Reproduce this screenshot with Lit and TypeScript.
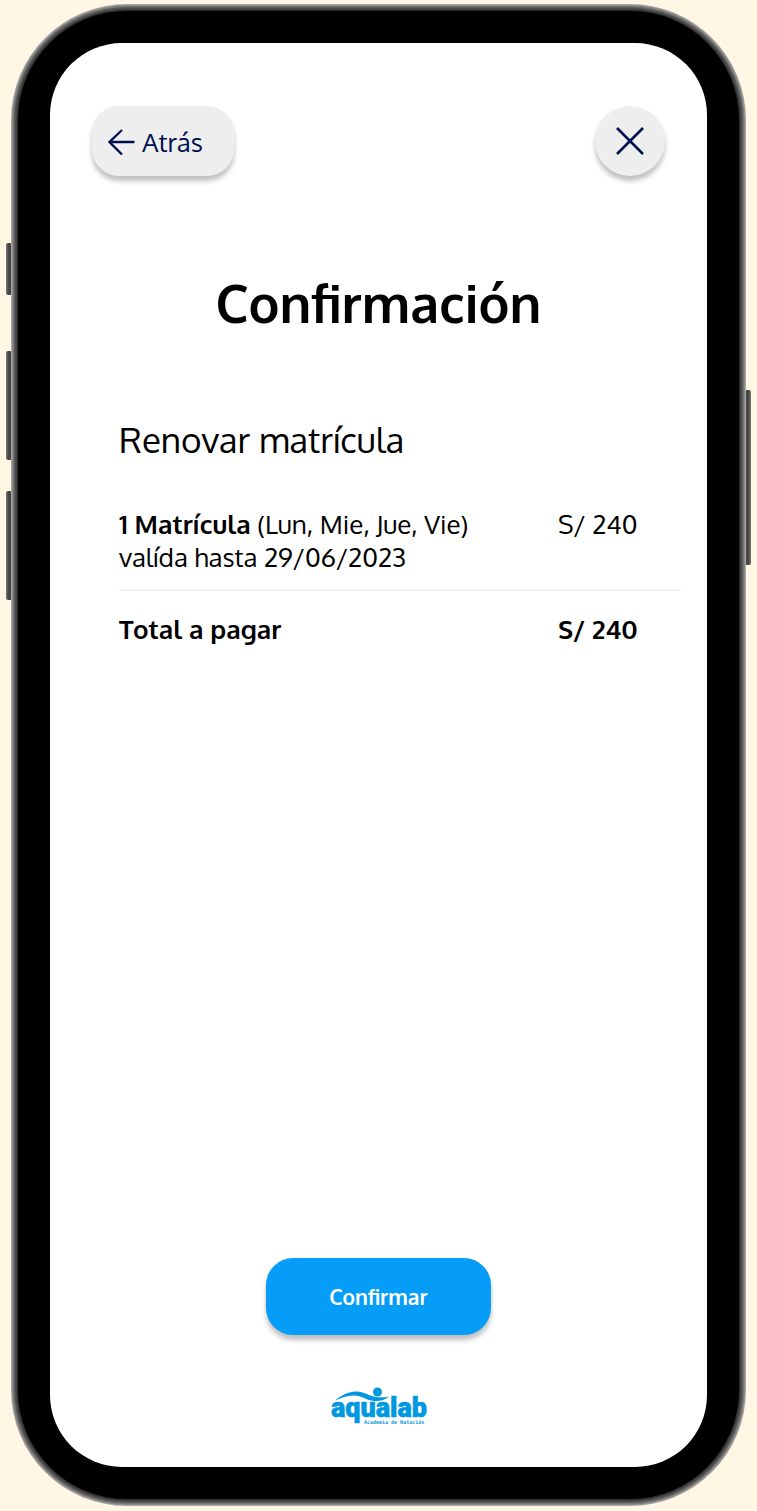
import { LitElement, html, css } from "lit";
import { customElement } from "lit/decorators.js";

@customElement("aqualab-logo")
class AqualabLogo extends LitElement {
  static styles = css`
    :host { display: block; line-height: 0; }
    .brand { font: 900 27px Roboto, "Open Sans", sans-serif; stroke: #0099e0; stroke-width: 0.6px; }
    .tagline { font: 700 5px "DejaVu Sans Mono", monospace; }
  `;

  render() {
    return html`
      <svg width="96" height="38" viewBox="0 0 96 38" fill="#0099e0" role="img" aria-label="aqualab, Academia de Natación">
        <circle cx="46.500" cy="5" r="4.500"></circle>
        <path d="M4 13.500C10 8 19 4 26 4.500C34 5 38 9 45 10C50 10.500 54 10.500 58 9.500C54 13 49 14.500 43 14C35 13.500 31 8.500 23 8.500C16 8.500 10 11 4 13.500Z"></path>
        <text class="brand" x="0" y="30">aqualab</text>
        <text class="tagline" x="33" y="37">Academia de Natación</text>
      </svg>
    `;
  }
}

@customElement("phone-frame")
class PhoneFrame extends LitElement {
  static styles = css`
    :host { display: flex; flex-direction: column; flex: 1; position: relative; }
    .body {
      flex: 1;
      display: flex;
      flex-direction: column;
      position: relative;
      margin: 7px;
      padding: 32px;
      background: #000;
      border-radius: 109px;
      box-shadow:
        0 0 0 1px #2a2a2a,
        0 0 0 2px #404040,
        0 0 0 3px #4c4c4c,
        0 0 0 4px #5c5c5c,
        0 0 0 5px #757575,
        0 0 0 6px #8a8a8a,
        0 0 0 7px #a8a6a2;
    }
    .screen {
      flex: 1;
      display: flex;
      flex-direction: column;
      background: #fff;
      border-radius: 72px;
    }
    .key {
      position: absolute;
      width: 6px;
      border-radius: 2px;
      background: linear-gradient(to right, #777, #484848 40%, #404040);
    }
    .mute { left: -5px; top: 239px; height: 52px; }
    .volume-up { left: -5px; top: 347px; height: 109px; }
    .volume-down { left: -5px; top: 487px; height: 109px; }
    .power { right: -5px; top: 386px; height: 175px; background: linear-gradient(to left, #777, #484848 40%, #404040); }
  `;

  render() {
    return html`
      <span class="key mute"></span>
      <span class="key volume-up"></span>
      <span class="key volume-down"></span>
      <span class="key power"></span>
      <div class="body"><div class="screen"><slot></slot></div></div>
    `;
  }
}

@customElement("app-root")
class AppRoot extends LitElement {
  static styles = css`
    :host {
      display: flex;
      box-sizing: border-box;
      min-height: 100vh;
      padding: 4px 11px 5px;
      background: #fff6e4;
      color: #000;
      font-family: Oxygen, "Noto Sans", "Open Sans", sans-serif;
    }
    .view {
      flex: 1;
      display: flex;
      flex-direction: column;
      padding: 63px 0 42px;
    }
    .bar {
      display: flex;
      justify-content: space-between;
      padding: 0 42px;
    }
    button {
      border: 0;
      margin: 0;
      font-family: inherit;
      cursor: pointer;
      box-shadow: 0 5px 5px rgba(0, 0, 0, 0.25);
    }
    .back, .close {
      display: flex;
      align-items: center;
      height: 70px;
      background: #eee;
      color: #00104f;
    }
    .back {
      gap: 6px;
      width: 142px;
      padding: 0 16px;
      border-radius: 27px;
      font-size: 26px;
    }
    .close {
      justify-content: center;
      width: 70px;
      padding: 0;
      border-radius: 50%;
    }
    svg { flex: none; }
    h1 {
      margin: 89px 0 0;
      font-size: 52px;
      line-height: 76px;
      font-weight: 600;
      text-align: center;
    }
    .order {
      flex: 1;
      padding: 72px 26px 48px 69px;
    }
    h2 {
      margin: 0;
      font-size: 35px;
      line-height: 52px;
      font-weight: 400;
    }
    table {
      width: 100%;
      margin-top: 42px;
      border-collapse: collapse;
      font-size: 26px;
      line-height: 33px;
    }
    th, td {
      padding: 0;
      text-align: left;
      vertical-align: top;
      font-weight: 400;
    }
    .amount { width: 123px; white-space: nowrap; }
    tbody th, tbody td { padding-bottom: 16px; border-bottom: 2px solid #f1f1f1; }
    tfoot th, tfoot td { padding-top: 21px; font-weight: 600; }
    b { font-weight: 600; }
    .foot {
      display: flex;
      flex-direction: column;
      align-items: center;
      gap: 52px;
    }
    .confirm {
      width: 225px;
      height: 77px;
      border-radius: 27px;
      background: #059df7;
      color: #fff;
      font-size: 21px;
      font-weight: 600;
    }
  `;

  render() {
    return html`
      <phone-frame>
        <main class="view">
          <nav class="bar">
            <button class="back" type="button">
              <svg width="28" height="28" viewBox="0 0 28 28" fill="none" stroke="currentColor" stroke-width="2.300">
                <path d="M14 3L1.500 15L14 27.500M1.500 15H26.500"></path>
              </svg>
              Atrás
            </button>
            <button class="close" type="button" aria-label="Cerrar">
              <svg width="28" height="28" viewBox="0 0 28 28" fill="none" stroke="currentColor" stroke-width="2.600">
                <path d="M1 1L27 27M27 1L1 27"></path>
              </svg>
            </button>
          </nav>
          <h1>Confirmación</h1>
          <section class="order">
            <h2 id="order-title">Renovar matrícula</h2>
            <table aria-labelledby="order-title">
              <tbody>
                <tr>
                  <th scope="row"><b>1 Matrícula</b> (Lun, Mie, Jue, Vie)<br />valída hasta 29/06/2023</th>
                  <td class="amount">S/ 240</td>
                </tr>
              </tbody>
              <tfoot>
                <tr>
                  <th scope="row">Total a pagar</th>
                  <td class="amount">S/ 240</td>
                </tr>
              </tfoot>
            </table>
          </section>
          <footer class="foot">
            <button class="confirm" type="button">Confirmar</button>
            <aqualab-logo></aqualab-logo>
          </footer>
        </main>
      </phone-frame>
    `;
  }
}
